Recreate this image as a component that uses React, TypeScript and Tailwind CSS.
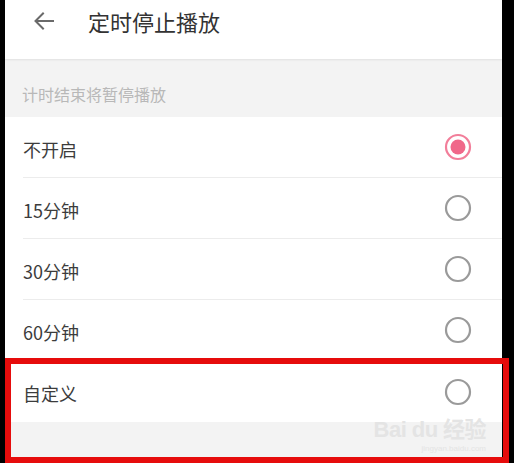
import React from 'react';

const options = [
  { label: '不开启', checked: true },
  { label: '15分钟', checked: false },
  { label: '30分钟', checked: false },
  { label: '60分钟', checked: false },
  { label: '自定义', checked: false },
];

function Radio({ checked }: { checked: boolean }) {
  return (
    <svg width="28" height="28" viewBox="0 0 28 28">
      {checked ? (
        <>
          <circle cx="14" cy="14" r="12" fill="none" stroke="#f27e9a" strokeWidth="2.2" />
          <circle cx="14" cy="14" r="7.5" fill="#f0688a" />
        </>
      ) : (
        <circle cx="14" cy="14" r="12" fill="none" stroke="#9a9a9a" strokeWidth="2.2" />
      )}
    </svg>
  );
}

export default function App() {
  return (
    <div className="w-[514px] h-[463px] bg-black flex overflow-hidden relative" style={{ fontFamily: '"Noto Sans CJK SC", "Noto Sans", sans-serif' }}>
      <div className="ml-[5px] w-[497px] h-full bg-[#f3f3f3] flex flex-col">
        <div className="h-[59px] bg-white flex items-start pt-[10px] shadow-[0_1px_2px_rgba(0,0,0,0.08)] relative z-10">
          <svg className="ml-[27px] mt-[-1px]" width="24" height="24" viewBox="0 0 24 24" fill="none" stroke="#6a6a6a" strokeWidth="2" strokeLinecap="square">
            <path d="M21 12H4M11 4.5L3.5 12l7.5 7.5" />
          </svg>
          <span className="ml-[32px] text-[22px] text-[#333] leading-[22px]">定时停止播放</span>
        </div>
        <div className="h-[58px] pt-[27px] pl-[17px] text-[16px] leading-[16px] text-[#b8b8b8]">
          计时结束将暂停播放
        </div>
        <div className="bg-white">
          {options.map((o, i) => (
            <div key={o.label} className="pl-[18px]">
              <div className={`h-[61px] flex items-center justify-between pr-[30px] ${i < options.length - 1 ? 'border-b border-[#ececec]' : ''}`}>
                <span className="text-[18px] leading-[18px] mt-[3px] text-[#3c3c3c]">{o.label}</span>
                <Radio checked={o.checked} />
              </div>
            </div>
          ))}
        </div>
      </div>
      <div className="absolute right-[28px] bottom-[10px] flex flex-col items-end text-[#e4e4e4] leading-none select-none">
        <span className="text-[22px] font-bold tracking-tight" style={{ fontFamily: '"Liberation Sans", "Noto Sans CJK SC", sans-serif' }}>Bai du 经验</span>
        <span className="text-[8px] mt-[4px]" style={{ fontFamily: '"Liberation Sans", sans-serif' }}>jingyan.baidu.com</span>
      </div>
      <div className="absolute left-[5px] top-[358px] w-[504px] h-[105px] border-[6px] border-[#e60c0c]" />
    </div>
  );
}
